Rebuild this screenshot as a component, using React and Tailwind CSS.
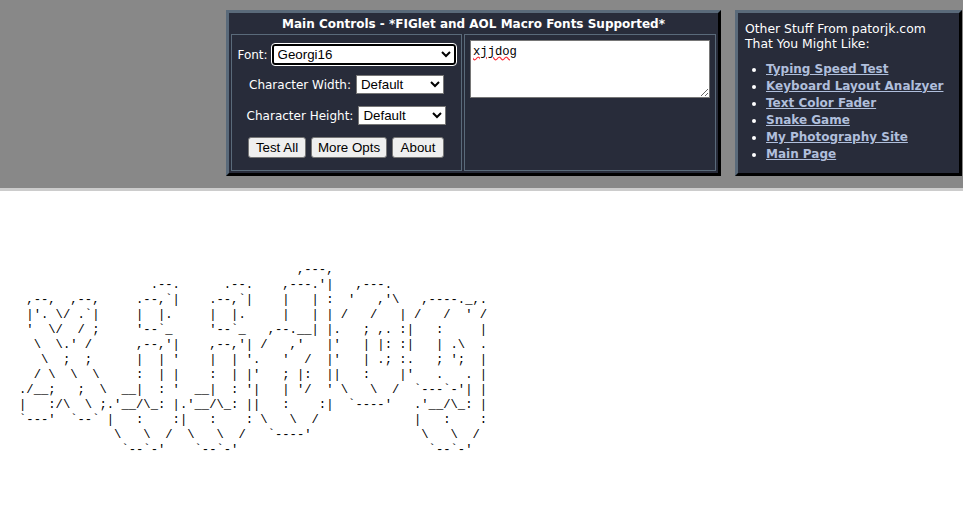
// Main Controls page, top panel + ascii art output
const LINKS = [
  'Typing Speed Test',
  'Keyboard Layout Analzyer',
  'Text Color Fader',
  'Snake Game',
  'My Photography Site',
  'Main Page',
];

const ART = [
  "                                      ,---,",
  "                  .--.      .--.    ,---.'|   ,---.",
  " ,--,  ,--,     .--,`|    .--,`|    |   | :  '   ,'\\   ,----._,.",
  " |'. \\/ .`|     |  |.     |  |.     |   | | /   /   | /   /  ' /",
  " '  \\/  / ;     '--`_     '--`_   ,--.__| |.   ; ,. :|   :     |",
  "  \\  \\.' /      ,--,'|    ,--,'| /   ,'   |'   | |: :|   | .\\  .",
  "   \\  ;  ;      |  | '    |  | '.   '  /  |'   | .; :.   ; ';  |",
  "  / \\  \\  \\     :  | |    :  | |'   ; |:  ||   :    |'   .   . |",
  "./__;   ;  \\  __|  : '  __|  : '|   | '/  ' \\   \\  /  `---`-'| |",
  "|   :/\\  \\ ;.'__/\\_: |.'__/\\_: ||   :    :|  `----'   .'__/\\_: |",
  "`---'  `--` |   :    :|   :    : \\   \\  /             |   :    :",
  "             \\   \\  /  \\   \\  /   `----'               \\   \\  /",
  "              `--`-'    `--`-'                          `--`-'",
];

function Btn({ children, className }) {
  return (
    <button className={`h-[21px] bg-[#efefef] border border-[#767676] rounded-[3px] text-[13.33px] text-black font-['Liberation_Sans',sans-serif] ${className}`}>
      {children}
    </button>
  );
}

function Sel({ children, className }) {
  return (
    <select className={`bg-white text-black text-[13.33px] font-['Liberation_Sans',sans-serif] ${className}`}>
      <option>{children}</option>
    </select>
  );
}

export default function App() {
  return (
    <div className="min-h-[517px] bg-white font-['DejaVu_Sans',sans-serif] overflow-hidden">
      <div className="h-[191px] bg-[#888888] border-b-[3px] border-[#cccccc] pt-[10px] pl-[226px] flex gap-[14px] text-white">
        {/* main controls */}
        <div className="w-[495px] h-[166px] bg-[#282c3a] border-[3px] border-t-[#5a6a7a] border-l-[#5a6a7a] border-r-black border-b-black flex flex-col">
          <div className="h-[21px] flex items-center justify-center text-[12px] font-bold">
            Main Controls - *FIGlet and AOL Macro Fonts Supported*
          </div>
          <div className="flex-1 flex gap-[2px] px-[2px] pb-[2px] text-[12px]">
            <div className="w-[231px] border border-[#5a6a7a] flex flex-col items-center pt-[9px]">
              <div className="flex items-center gap-[4px] h-[21px]">
                <span>Font:</span>
                <Sel className="w-[184px] h-[21px] rounded-[3px] border-2 border-black outline-1 outline-white">Georgi16</Sel>
              </div>
              <div className="flex items-center gap-[5px] h-[19px] mt-[10px]">
                <span>Character Width:</span>
                <Sel className="w-[88px] h-[19px] border border-[#767676]">Default</Sel>
              </div>
              <div className="flex items-center gap-[5px] h-[19px] mt-[12px]">
                <span>Character Height:</span>
                <Sel className="w-[88px] h-[19px] border border-[#767676]">Default</Sel>
              </div>
              <div className="flex gap-[5px] mt-[12px] mr-[1px]">
                <Btn className="w-[58px]">Test All</Btn>
                <Btn className="w-[76px]">More Opts</Btn>
                <Btn className="w-[52px]">About</Btn>
              </div>
            </div>
            <div className="flex-1 border border-[#5a6a7a] pt-[5px] px-[5px]">
              <textarea
                spellCheck={false}
                defaultValue="xjjdog"
                className="block w-[240px] h-[58px] bg-white text-black border border-[#767676] px-[2px] pt-[4px] text-[12.2px] leading-[15px] font-['Liberation_Mono',monospace] underline decoration-wavy decoration-red-500"
              />
            </div>
          </div>
        </div>
        {/* other stuff */}
        <div className="w-[227px] h-[166px] bg-[#282c3a] border-[3px] border-t-[#5a6a7a] border-l-[#5a6a7a] border-r-black border-b-black pl-[7px] pt-[8px] text-[12.4px] leading-[15px]">
          <p>Other Stuff From patorjk.com</p>
          <p>That You Might Like:</p>
          <ul className="mt-[10px] pl-[21px] list-disc text-[12px] leading-[17px]">
            {LINKS.map(l => (
              <li key={l}>
                <a href="#" className="text-[#b0bfdc] font-bold underline">{l}</a>
              </li>
            ))}
          </ul>
        </div>
      </div>
      <pre className="mt-[72px] pl-[19px] text-[12.2px] leading-[15px] text-black font-['Liberation_Mono',monospace]">
        {ART.join('\n')}
      </pre>
    </div>
  );
}
